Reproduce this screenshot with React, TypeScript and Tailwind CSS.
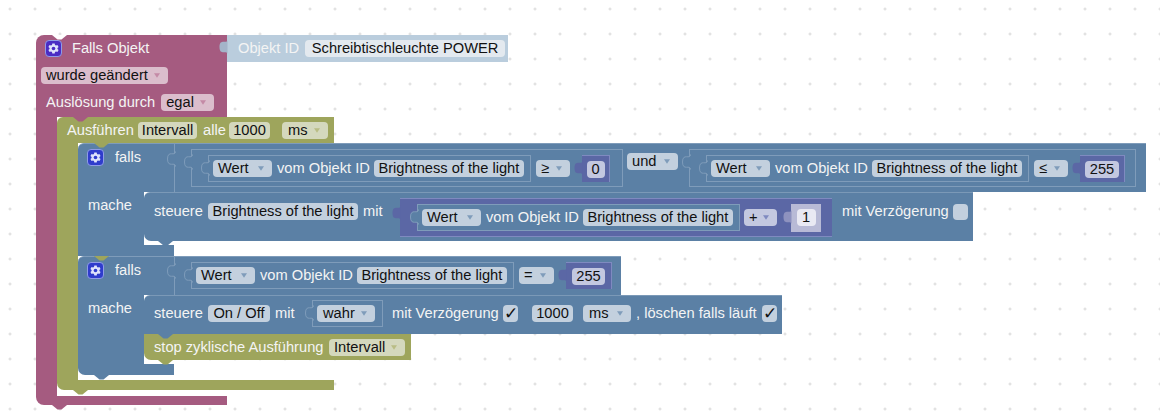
import type { ReactNode } from "react";
import clsx from "clsx";

const fieldTones = {
  magenta: "bg-[#dbbdcc]",
  olive: "bg-[#d4d8bd]",
  blue: "bg-[#c3d0de]",
  sky: "bg-[#e3e9ef]",
  math: "bg-[#c3c8e0]",
  lilac: "bg-[#e9e9f3]",
};

function Field({
  children,
  tone = "blue",
  arrow,
  className,
}: {
  children?: ReactNode;
  tone?: keyof typeof fieldTones;
  arrow?: string;
  className: string;
}) {
  return (
    <span
      className={clsx(
        "flex h-[17px] shrink-0 items-center rounded-[4px] whitespace-nowrap text-[#111]",
        arrow ? "justify-between pr-[8px] pl-[5px]" : "justify-center",
        fieldTones[tone],
        className
      )}
    >
      {children}
      {arrow && (
        <svg width="6" height="5" viewBox="0 0 7 5">
          <path d="M0 0h7L3.500 5z" fill={arrow} />
        </svg>
      )}
    </span>
  );
}

function Label({ children, className }: { children: ReactNode; className?: string }) {
  return <span className={clsx("shrink-0 whitespace-nowrap text-[#f4f4f4]", className)}>{children}</span>;
}

// dent in the top edge of a statement block, shows the colour of the parent
function Notch({ fill, className }: { fill: string; className: string }) {
  return (
    <svg className={clsx("absolute top-0 z-10", className)} width="15" height="5" viewBox="0 0 15 5">
      <path d="M0 0l5.500 4.500h4L15 0z" fill={fill} />
    </svg>
  );
}

// tab under the bottom edge of a statement block
function BottomTab({ fill, className }: { fill: string; className: string }) {
  return (
    <svg className={clsx("absolute -bottom-[5px] z-10", className)} width="15" height="5" viewBox="0 0 15 5">
      <path d="M0 0l5.500 4.500h4L15 0z" fill={fill} />
    </svg>
  );
}

// puzzle tab on the left side of a value block
function ValueTab({ fill, stroke, className }: { fill: string; stroke?: string; className?: string }) {
  return (
    <svg className={clsx("absolute z-10", className ?? "-left-[8px] top-[4px]")} width="9" height="16" viewBox="0 0 9 16">
      <path d="M8.500 0.500C8.500 6 0.500 -1.500 0.500 8S8.500 10 8.500 15.500" fill={fill} stroke={stroke ?? "none"} />
    </svg>
  );
}

function GearIcon({ bg }: { bg: string }) {
  return (
    <svg width="17" height="17" viewBox="0 0 17 17" className="shrink-0">
      <rect x="0.500" y="0.500" width="16" height="16" rx="3.500" fill={bg} stroke="#8f9be6" />
      <path
        d="M7.300 3.500h2.400l.3 1.500 1 .5 1.400-.6 1.200 2-1.200 1 .1.600-.1.600 1.200 1-1.200 2-1.400-.6-1 .5-.3 1.500H7.300L7 12 6 11.500l-1.400.6-1.200-2 1.200-1-.1-.6.100-.6-1.200-1 1.200-2 1.400.6 1-.5z"
        fill="#dfe3fb"
      />
      <circle cx="8.500" cy="8.500" r="1.800" fill={bg} />
    </svg>
  );
}

// "Wert v vom Objekt ID <name>"
function GetValue({ className }: { className?: string }) {
  return (
    <div className={clsx("relative flex h-[27px] w-[323px] shrink-0 items-center gap-[4px] border border-[#7f9cba] bg-[#5b80a5] pl-[4px]", className)}>
      <ValueTab fill="#5b80a5" stroke="#7f9cba" />
      <Field arrow="#7f9cba" className="w-[59px]">Wert</Field>
      <Label className="ml-[1px]">vom Objekt ID</Label>
      <Field className="w-[150px]">Brightness of the light</Field>
    </div>
  );
}

function NumberBlock({ value, className, field }: { value: string; className: string; field: string }) {
  return (
    <div className={clsx("relative flex h-[27px] shrink-0 items-center justify-center border-t border-r border-[#7f8ac0] bg-[#5b67a5]", className)}>
      <ValueTab fill="#5b67a5" />
      <Field tone="math" className={field}>{value}</Field>
    </div>
  );
}

function Compare({ op, value, width, numWidth, fieldWidth }: {
  op: string;
  value: string;
  width: string;
  numWidth: string;
  fieldWidth: string;
}) {
  return (
    <div className={clsx("relative flex h-[38px] shrink-0 items-start border border-[#7f9cba] bg-[#5b80a5] pt-[5px] pl-[16px]", width)}>
      <ValueTab fill="#5b80a5" stroke="#7f9cba" />
      <GetValue />
      <Field arrow="#7f9cba" className="mt-[5px] ml-[5px] w-[34px]">{op}</Field>
      <NumberBlock value={value} className={clsx("ml-[12px]", numWidth)} field={fieldWidth} />
    </div>
  );
}

function IfBlock({ condition, rowHeight, body, last }: {
  condition: ReactNode;
  rowHeight: string;
  body: ReactNode;
  last?: boolean;
}) {
  return (
    <div className="relative w-fit">
      <Notch fill="#9ea55c" className="left-[16px]" />
      <div className="flex">
        <div className={clsx("flex w-[96px] shrink-0 items-start gap-[11px] rounded-tl-[6px] border-t border-[#7f9cba] bg-[#5b80a5] pt-[5px] pl-[9px]", rowHeight)}>
          <GearIcon bg="#2f3ccc" />
          <Label className="mt-[1px]">falls</Label>
        </div>
        {condition}
      </div>
      <div className="flex">
        <div className="w-[66px] shrink-0 bg-[#5b80a5] pt-[6px] pl-[10px]">
          <Label>mache</Label>
        </div>
        <div className="pb-[4px]">{body}</div>
      </div>
      <div className={clsx("relative h-[11px] w-[96px] bg-[#5b80a5]", last && "rounded-bl-[7px]")}>
        <BottomTab fill="#5b80a5" className="left-[16px]" />
      </div>
    </div>
  );
}

function Statement({ children, className, fill = "#5b80a5", tab }: {
  children: ReactNode;
  className: string;
  fill?: string;
  tab?: boolean;
}) {
  return (
    <div className={clsx("relative flex shrink-0 rounded-tl-[6px] border-t border-white/20 bg-[#5b80a5]", className)}>
      <Notch fill="#5b80a5" className="left-[14px]" />
      {children}
      {tab && <BottomTab fill={fill} className="left-[14px]" />}
    </div>
  );
}

export default function App() {
  return (
    <div className="relative h-[420px] w-[1160px] overflow-hidden bg-white font-['Liberation_Sans',Arial,sans-serif] text-[14.67px] leading-none">
      {/* workspace grid */}
      <svg className="absolute inset-0" width="1160" height="420">
        <defs>
          <pattern id="grid" x="8.500" y="7.500" width="25" height="25" patternUnits="userSpaceOnUse">
            <path d="M0 1.500h3M1.500 0v3" stroke="#d8d8d8" strokeWidth="1" />
          </pattern>
        </defs>
        <rect width="1160" height="420" fill="url(#grid)" />
      </svg>

      <div className="relative w-fit pt-[35px] pl-[36px]">
        {/* Falls Objekt */}
        <div className="flex items-start">
          <div className="relative h-[82px] w-[191px] shrink-0 rounded-tl-[8px] bg-[#a55b80]">
            <Notch fill="#ffffff" className="left-[16px]" />
            <div className="flex h-[27px] items-center gap-[10px] pl-[9px]">
              <GearIcon bg="#4a2cc4" />
              <Label>Falls Objekt</Label>
            </div>
            <div className="flex h-[27px] items-center pl-[5px]">
              <Field tone="magenta" arrow="#c48aa6" className="w-[127px]">wurde geändert</Field>
            </div>
            <div className="flex h-[27px] items-center gap-[6px] pl-[10px]">
              <Label>Auslösung durch</Label>
              <Field tone="magenta" arrow="#c48aa6" className="w-[53px]">egal</Field>
            </div>
          </div>
          <div className="relative flex h-[27px] w-[281px] shrink-0 items-center gap-[6px] bg-[#bacddd] pl-[11px]">
            <ValueTab fill="#a4b4c9" />
            <Label>Objekt ID</Label>
            <Field tone="sky" className="w-[200px]">Schreibtischleuchte POWER</Field>
          </div>
        </div>

        <div className="flex">
          <div className="w-[21px] shrink-0 bg-[#a55b80]" />
          <div className="pb-[6px]">
            {/* Ausführen Intervall */}
            <div className="relative w-fit">
              <Notch fill="#a55b80" className="left-[16px]" />
              <div className="flex h-[26px] w-[277px] items-center rounded-tl-[6px] bg-[#9ea55c] pl-[10px]">
                <Label className="w-[71px]">Ausführen</Label>
                <Field tone="olive" className="w-[59px]">Intervall</Field>
                <Label className="ml-[6px] w-[26px]">alle</Label>
                <Field tone="olive" className="w-[41px]">1000</Field>
                <Field tone="olive" arrow="#b9bd85" className="ml-[12px] w-[46px] pl-[6px]">ms</Field>
              </div>
              <div className="flex">
                <div className="w-[21px] shrink-0 bg-[#9ea55c]" />
                <div className="pb-[5px]">
                  <IfBlock
                    rowHeight="h-[49px]"
                    condition={
                      <div className="relative flex h-[49px] w-[972px] shrink-0 items-start border-t border-l border-[#7f9cba] bg-[#5b80a5] pt-[5px] pl-[16px]">
                        <ValueTab fill="#5b80a5" stroke="#7f9cba" className="-left-[8px] top-[7px]" />
                        <Compare op="≥" value="0" width="w-[432px]" numWidth="w-[28px]" fieldWidth="w-[18px]" />
                        <Field arrow="#7f9cba" className="mt-[4px] ml-[4px] w-[51px]">und</Field>
                        <div className="ml-[11px]">
                          <Compare op="≤" value="255" width="w-[447px]" numWidth="w-[45px]" fieldWidth="w-[34px]" />
                        </div>
                      </div>
                    }
                    body={
                      <Statement className="h-[49px] w-[829px] rounded-bl-[7px]" tab>
                        <div className="flex h-[37px] items-center pl-[10px]">
                          <Label className="w-[54px]">steuere</Label>
                          <Field className="w-[150px]">Brightness of the light</Field>
                          <Label className="ml-[5px] w-[37px]">mit</Label>
                          <div className="relative flex h-[39px] w-[432px] shrink-0 translate-y-[6px] items-center border-t border-b border-[#7f8ac0] bg-[#5b67a5] pl-[17px]">
                            <ValueTab fill="#5b67a5" className="-left-[8px] top-[6px]" />
                            <GetValue />
                            <Field tone="math" arrow="#7f8ac0" className="ml-[4px] w-[33px]">+</Field>
                            <div className="relative ml-[14px] flex h-[28px] w-[30px] shrink-0 items-center justify-center bg-[#b8bad6]">
                              <ValueTab fill="#8e92bf" className="-left-[8px] top-[5px]" />
                              <Field tone="lilac" className="w-[19px]">1</Field>
                            </div>
                          </div>
                          <Label className="ml-[10px] w-[111px]">mit Verzögerung</Label>
                          <span className="h-[16px] w-[15px] shrink-0 rounded-[4px] bg-[#c3d0de]" />
                        </div>
                      </Statement>
                    }
                  />
                  <IfBlock
                    last
                    rowHeight="h-[39px]"
                    condition={
                      <div className="relative flex h-[39px] w-[447px] shrink-0 items-start border-t border-l border-[#7f9cba] bg-[#5b80a5] pt-[5px] pl-[16px]">
                        <ValueTab fill="#5b80a5" stroke="#7f9cba" className="-left-[8px] top-[6px]" />
                        <GetValue />
                        <Field arrow="#7f9cba" className="mt-[5px] ml-[5px] w-[35px]">=</Field>
                        <NumberBlock value="255" className="ml-[12px] w-[46px]" field="w-[33px]" />
                      </div>
                    }
                    body={
                      <div>
                        <Statement className="h-[39px] w-[638px]">
                          <div className="flex h-[34px] items-center pl-[10px]">
                            <Label className="w-[54px]">steuere</Label>
                            <Field className="w-[62px]">On / Off</Field>
                            <Label className="ml-[5px] w-[37px]">mit</Label>
                            <div className="relative flex h-[27px] w-[71px] shrink-0 items-center border border-[#7f9cba] pl-[4px]">
                              <ValueTab fill="#5b80a5" stroke="#7f9cba" />
                              <Field arrow="#7f9cba" className="w-[58px] pl-[6px]">wahr</Field>
                            </div>
                            <Label className="ml-[9px] w-[111px]">mit Verzögerung</Label>
                            <Field className="w-[15px] text-[17px]">✓</Field>
                            <Field className="ml-[14px] w-[41px]">1000</Field>
                            <Field arrow="#7f9cba" className="ml-[10px] w-[48px] pl-[6px]">ms</Field>
                            <Label className="ml-[5px] w-[126px]">, löschen falls läuft</Label>
                            <Field className="w-[15px] text-[17px]">✓</Field>
                          </div>
                        </Statement>
                        <div className="relative flex h-[26px] w-[267px] items-center rounded-bl-[7px] bg-[#9ea55c] pl-[10px]">
                          <Notch fill="#5b80a5" className="left-[14px]" />
                          <Label className="w-[175px]">stop zyklische Ausführung</Label>
                          <Field tone="olive" arrow="#b9bd85" className="w-[76px]">Intervall</Field>
                          <BottomTab fill="#9ea55c" className="left-[14px]" />
                        </div>
                      </div>
                    }
                  />
                </div>
              </div>
              <div className="relative h-[10px] w-[277px] rounded-bl-[7px] bg-[#9ea55c]">
                <BottomTab fill="#9ea55c" className="left-[16px]" />
              </div>
            </div>
          </div>
        </div>
        <div className="relative h-[9px] w-[191px] rounded-bl-[8px] bg-[#a55b80]">
          <BottomTab fill="#a55b80" className="left-[16px]" />
        </div>
      </div>
    </div>
  );
}
